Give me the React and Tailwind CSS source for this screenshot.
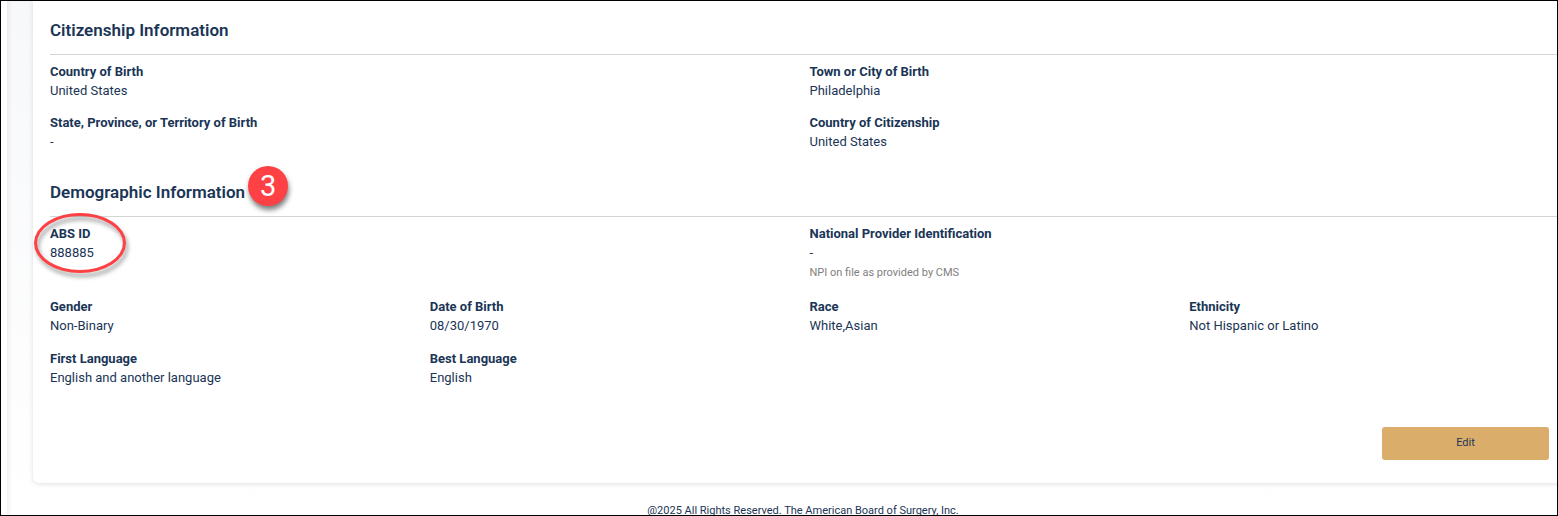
import React from 'react'

function SectionTitle({ children }) {
  return (
    <h2 className="h-[37px] border-b border-[#d3d5d7] text-[17px] leading-[24px] font-semibold">
      <span className="relative inline-block">{children}</span>
    </h2>
  )
}

function Field({ label, value, note, className = '', children }) {
  return (
    <div className={`relative text-[13px] leading-[19px] ${className}`}>
      <dt className="font-bold">{label}</dt>
      <dd>{value}</dd>
      {note && <dd className="text-[11px] leading-[21px] text-[#808080]">{note}</dd>}
      {children}
    </div>
  )
}

function StepBadge({ number }) {
  return (
    <span className="absolute -top-[14px] left-full ml-[3px] flex size-10 items-center justify-center rounded-full bg-[#fe4145] text-[29px] leading-none font-normal text-white shadow-[1px_4px_5px_rgba(0,0,0,0.5)]">
      {number}
    </span>
  )
}

function Highlight() {
  return (
    <span className="pointer-events-none absolute -top-[11px] -left-4 h-[60px] w-[92px] rounded-[50%] border-3 border-[#fe4145] drop-shadow-[2px_4px_2px_rgba(0,0,0,0.4)]" />
  )
}

export default function App() {
  return (
    <div className="h-screen overflow-hidden border border-black bg-white pl-[6px] font-[Roboto,'Liberation_Sans',sans-serif] text-[#1a3556]">
      <main className="-mr-[42px] min-h-full bg-linear-to-b from-[#f7f8fa] to-white pr-[13px] pl-[26px] shadow-[inset_4px_0_4px_-2px_rgba(0,0,0,0.07)]">
        <section className="rounded-b-md bg-white px-[17px] pt-[17px] pb-[23px] shadow-[0_1px_5px_rgba(0,0,0,0.12)]">
          <SectionTitle>Citizenship Information</SectionTitle>
          <dl className="grid grid-cols-2 gap-y-[13px] pt-[7px]">
            <Field label="Country of Birth" value="United States" />
            <Field label="Town or City of Birth" value="Philadelphia" />
            <Field label="State, Province, or Territory of Birth" value="-" />
            <Field label="Country of Citizenship" value="United States" />
          </dl>

          <div className="pt-[29px]">
            <SectionTitle>
              Demographic Information
              <StepBadge number={3} />
            </SectionTitle>
          </div>
          <dl className="grid grid-cols-4 gap-y-[14px] pt-[7px]">
            <Field className="col-span-2" label="ABS ID" value="888885">
              <Highlight />
            </Field>
            <Field
              className="col-span-2"
              label="National Provider Identification"
              value="-"
              note="NPI on file as provided by CMS"
            />
            <Field label="Gender" value="Non-Binary" />
            <Field label="Date of Birth" value="08/30/1970" />
            <Field label="Race" value="White,Asian" />
            <Field label="Ethnicity" value="Not Hispanic or Latino" />
            <Field label="First Language" value="English and another language" />
            <Field label="Best Language" value="English" />
          </dl>

          <div className="flex justify-end pt-10 pr-5">
            <button type="button" className="h-[33px] w-[167px] rounded-[3px] bg-[#daad6a] text-[11px]">
              Edit
            </button>
          </div>
        </section>
        <footer className="pt-5 pr-[13px] text-center text-[11px] leading-4">
          @2025 All Rights Reserved. The American Board of Surgery, Inc.
        </footer>
      </main>
    </div>
  )
}
